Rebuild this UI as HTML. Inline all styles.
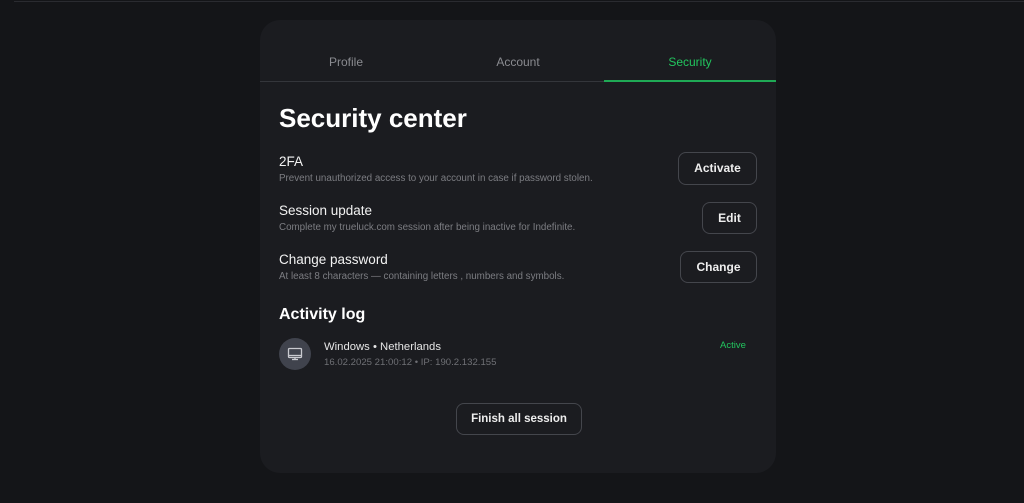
<!DOCTYPE html>
<html><head><meta charset="utf-8"><style>
*{margin:0;padding:0;box-sizing:border-box}
body{width:1024px;height:503px;background:#141518;font-family:"Liberation Sans",sans-serif;position:relative;overflow:hidden;color:#fff}
.topline{position:absolute;left:14px;right:0;top:1px;height:1px;background:#2a2b30}
.card{position:absolute;left:260px;top:20px;width:516px;height:453px;background:#1b1c20;border-radius:20px}
.tabs{position:absolute;top:0;left:0;right:0;height:62px;border-bottom:1px solid #34363b}
.tab{position:absolute;top:35px;width:172px;text-align:center;font-size:12px;color:#8a8b90}
.tab.on{color:#22c55e}
.ul{position:absolute;left:344px;width:172px;top:60px;height:2px;background:#1fa955}
h1{position:absolute;left:19px;top:83px;font-size:26px;font-weight:bold;letter-spacing:0}
.t{position:absolute;left:19px;font-size:13.5px;color:#f2f2f2}
.d{position:absolute;left:19px;font-size:9.8px;color:#7c7d82}
.btn{position:absolute;border:1px solid #44464c;border-radius:8px;font-size:12px;font-weight:bold;text-align:center;color:#eee}
h2{position:absolute;left:19px;top:286px;font-size:16px;font-weight:bold}
.ic{position:absolute;left:19px;top:318px;width:32px;height:32px;border-radius:50%;background:#40434d}
</style></head><body>
<div class="topline"></div>
<div class="card">
<div class="tabs"></div>
<div class="tab" style="left:0">Profile</div>
<div class="tab" style="left:172px">Account</div>
<div class="tab on" style="left:344px">Security</div>
<div class="ul"></div>
<h1>Security center</h1>
<div class="t" style="top:134px">2FA</div>
<div class="d" style="top:153px">Prevent unauthorized access to your account in case if password stolen.</div>
<div class="btn" style="left:418px;top:132px;width:79px;height:33px;line-height:31px">Activate</div>
<div class="t" style="top:183px">Session update</div>
<div class="d" style="top:202px">Complete my trueluck.com session after being inactive for Indefinite.</div>
<div class="btn" style="left:442px;top:182px;width:55px;height:32px;line-height:30px">Edit</div>
<div class="t" style="top:232px">Change password</div>
<div class="d" style="top:251px">At least 8 characters — containing letters , numbers and symbols.</div>
<div class="btn" style="left:420px;top:231px;width:77px;height:32px;line-height:30px">Change</div>
<h2>Activity log</h2>
<div class="ic"><svg width="32" height="32" viewBox="0 0 32 32" fill="none" stroke="#c9cad0" stroke-width="1.3"><rect x="9.5" y="10.5" width="13" height="9" rx="1"/><line x1="9.5" y1="17.5" x2="22.5" y2="17.5"/><line x1="16" y1="19.5" x2="16" y2="21.5"/><line x1="13" y1="21.5" x2="19" y2="21.5"/></svg></div>
<div style="position:absolute;left:64px;top:321px;font-size:11.3px;color:#e6e6e6">Windows • Netherlands</div>
<div style="position:absolute;left:64px;top:337px;font-size:9.6px;color:#6f7075">16.02.2025 21:00:12 • IP: 190.2.132.155</div>
<div style="position:absolute;left:460px;top:320px;font-size:9.5px;color:#22c55e">Active</div>
<div class="btn" style="left:196px;top:383px;width:126px;height:32px;line-height:30px;font-size:11.5px">Finish all session</div>
</div>
</body></html>
